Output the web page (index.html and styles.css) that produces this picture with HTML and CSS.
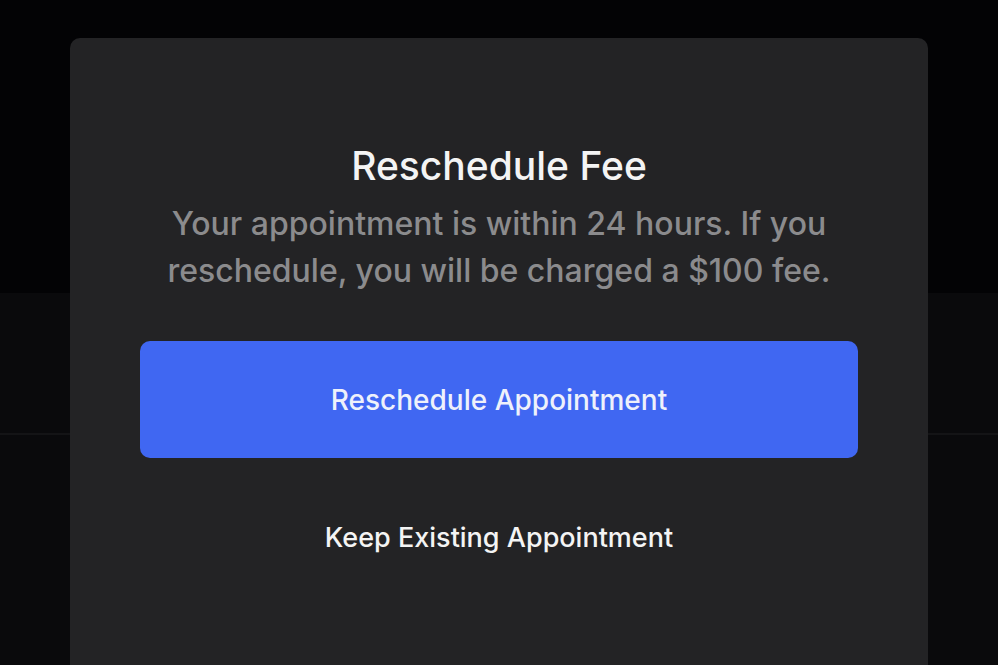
FILE: index.html
```html
<!DOCTYPE html>
<html lang="en">
<head>
    <meta charset="UTF-8">
    <meta name="viewport" content="width=device-width, initial-scale=1.0">
    <title>Reschedule Fee</title>
    <link rel="stylesheet" href="styles.css">
</head>
<body>
    <!-- Page behind the modal -->
    <div class="backdrop">
        <div class="band-top"></div>
        <div class="band-mid"></div>
        <div class="band-low"></div>
    </div>

    <!-- Reschedule fee modal -->
    <section class="modal">
        <h2 class="modal-title">Reschedule Fee</h2>
        <p class="modal-text">Your appointment is within 24 hours. If you reschedule, you will be charged a $100 fee.</p>
        <button class="btn-primary">Reschedule Appointment</button>
        <button class="btn-link">Keep Existing Appointment</button>
    </section>
</body>
</html>
```

FILE: styles.css
```css
body {
    font-family: Inter, "Liberation Sans", sans-serif;
    background-color: #030305;
    color: #f2f2f2;
    margin: 0;
    padding: 0;
    height: 665px;
    overflow: hidden;
    position: relative;
}

.backdrop {
    display: flex;
    flex-direction: column;
    height: 100%;
}

.band-top {
    height: 293px;
    background-color: #030305;
}

.band-mid {
    height: 140px;
    background-color: #0a0a0c;
    border-bottom: 2px solid #141416;
}

.band-low {
    flex: 1;
    background-color: #0a0a0c;
}

.modal {
    position: absolute;
    top: 38px;
    left: 70px;
    width: 858px;
    height: 660px;
    box-sizing: border-box;
    padding: 105px 70px 0;
    background-color: #232325;
    border-radius: 10px;
    display: flex;
    flex-direction: column;
    align-items: center;
    text-align: center;
}

.modal-title {
    margin: 0;
    font-size: 39px;
    font-weight: 500;
    line-height: 46px;
    color: #f4f4f4;
}

.modal-text {
    margin: 11px 0 0;
    font-size: 32px;
    font-weight: 500;
    line-height: 47px;
    color: #8b8b8d;
    max-width: 700px;
}

.btn-primary {
    flex-shrink: 0;
    width: 100%;
    height: 117px;
    margin-top: 47px;
    border: none;
    border-radius: 10px;
    background-color: #4067f2;
    color: #eef1fb;
    font-family: inherit;
    font-size: 28px;
    font-weight: 500;
    cursor: pointer;
}

.btn-link {
    margin-top: 63px;
    padding: 0;
    border: none;
    background: none;
    color: #f4f4f4;
    font-family: inherit;
    font-size: 27px;
    font-weight: 500;
    line-height: 33px;
    cursor: pointer;
}
```
